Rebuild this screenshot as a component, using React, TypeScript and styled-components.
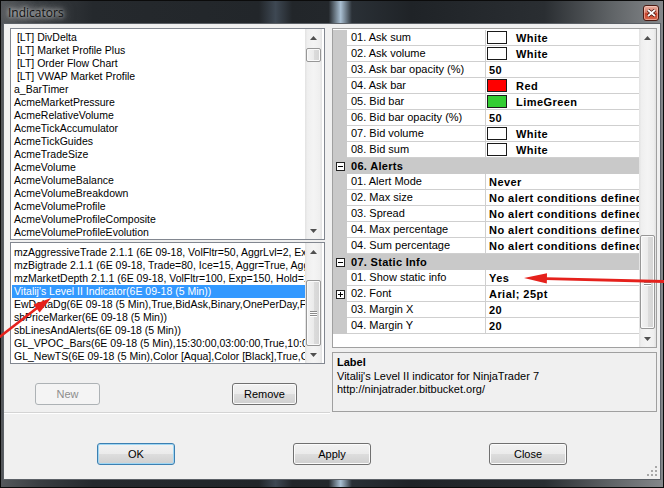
import React from 'react';
import styled, { createGlobalStyle } from 'styled-components';

const GlobalStyle = createGlobalStyle`
  html, body {
    margin: 0;
    padding: 0;
    background: #000;
  }
  body {
    font-family: 'Liberation Sans', Arial, sans-serif;
  }
  * {
    box-sizing: border-box;
  }
`;

const available = [
  ' [LT] DivDelta',
  ' [LT] Market Profile Plus',
  ' [LT] Order Flow Chart',
  ' [LT] VWAP Market Profile',
  'a_BarTimer',
  'AcmeMarketPressure',
  'AcmeRelativeVolume',
  'AcmeTickAccumulator',
  'AcmeTickGuides',
  'AcmeTradeSize',
  'AcmeVolume',
  'AcmeVolumeBalance',
  'AcmeVolumeBreakdown',
  'AcmeVolumeProfile',
  'AcmeVolumeProfileComposite',
  'AcmeVolumeProfileEvolution',
];

const applied = [
  'mzAggressiveTrade 2.1.1 (6E 09-18, VolFltr=50, AggrLvl=2, Exp=150)',
  'mzBigtrade 2.1.1 (6E 09-18, Trade=80, Ice=15, Aggr=True, Agg=5)',
  'mzMarketDepth 2.1.1 (6E 09-18, VolFltr=100, Exp=150, Hold=10)',
  "Vitalij's Level II Indicator(6E 09-18 (5 Min))",
  'EwDeltaDg(6E 09-18 (5 Min),True,BidAsk,Binary,OnePerDay,False)',
  'sbPriceMarker(6E 09-18 (5 Min))',
  'sbLinesAndAlerts(6E 09-18 (5 Min))',
  'GL_VPOC_Bars(6E 09-18 (5 Min),15:30:00,03:00:00,True,10:00:00)',
  'GL_NewTS(6E 09-18 (5 Min),Color [Aqua],Color [Black],True,Color [Red])',
];

type Prop = {
  name: string;
  value: string;
  swatch?: string;
  expand?: boolean;
};

type Section = { title?: string; rows: Prop[] };

const NO_ALERT = 'No alert conditions defined';

const sections: Section[] = [
  {
    rows: [
      { name: '01. Ask sum', value: 'White', swatch: '#ffffff' },
      { name: '02. Ask volume', value: 'White', swatch: '#ffffff' },
      { name: '03. Ask bar opacity (%)', value: '50' },
      { name: '04. Ask bar', value: 'Red', swatch: '#ff0000' },
      { name: '05. Bid bar', value: 'LimeGreen', swatch: '#32cd32' },
      { name: '06. Bid bar opacity (%)', value: '50' },
      { name: '07. Bid volume', value: 'White', swatch: '#ffffff' },
      { name: '08. Bid sum', value: 'White', swatch: '#ffffff' },
    ],
  },
  {
    title: '06. Alerts',
    rows: [
      { name: '01. Alert Mode', value: 'Never' },
      { name: '02. Max size', value: NO_ALERT },
      { name: '03. Spread', value: NO_ALERT },
      { name: '04. Max percentage', value: NO_ALERT },
      { name: '04. Sum percentage', value: NO_ALERT },
    ],
  },
  {
    title: '07. Static Info',
    rows: [
      { name: '01. Show static info', value: 'Yes' },
      { name: '02. Font', value: 'Arial; 25pt', expand: true },
      { name: '03. Margin X', value: '20' },
      { name: '04. Margin Y', value: '20' },
    ],
  },
];

const Arrow = ({ down }: { down?: boolean }) => (
  <svg width="7" height="4" viewBox="0 0 7 4">
    <path d={down ? 'M0 0 L7 0 L3.5 4 Z' : 'M0 4 L3.5 0 L7 4 Z'} fill="#505050" />
  </svg>
);

const Expander = ({ plus }: { plus?: boolean }) => (
  <svg width="9" height="9" viewBox="0 0 9 9">
    <rect x="0.5" y="0.5" width="8" height="8" fill="#fff" stroke="#222" />
    <line x1="2" y1="4.5" x2="7" y2="4.5" stroke="#000" />
    {plus && <line x1="4.5" y1="2" x2="4.5" y2="7" stroke="#000" />}
  </svg>
);

const ScrollBar = ({ top, size }: { top: number; size: number }) => (
  <ScrollTrack>
    <ArrowButton>
      <Arrow />
    </ArrowButton>
    <TrackBody>
      <Thumb $top={top} $size={size}>
        {size > 24 && (
          <Grip>
            <span />
            <span />
            <span />
          </Grip>
        )}
      </Thumb>
    </TrackBody>
    <ArrowButton>
      <Arrow down />
    </ArrowButton>
  </ScrollTrack>
);

const App = () => {
  return (
    <>
      <GlobalStyle />
      <Window>
        <TitleBar>
          <Caption>Indicators</Caption>
          <CloseButton>
            <svg width="9" height="8" viewBox="0 0 9 8">
              <path d="M1 1 L8 7 M8 1 L1 7" stroke="#3a0c05" strokeWidth="3.2" />
              <path d="M1 1 L8 7 M8 1 L1 7" stroke="#fff" strokeWidth="1.8" />
            </svg>
          </CloseButton>
        </TitleBar>

        <Client>
          <Main>
            <LeftPanel>
              <ListBox $height={212}>
                <Items $padTop={2}>
                  {available.map((item) => (
                    <Item key={item}>{item}</Item>
                  ))}
                </Items>
                <ScrollBar top={2} size={14} />
              </ListBox>
              <ListBox $height={122}>
                <Items $padTop={3}>
                  {applied.map((item, i) => (
                    <Item key={item} $selected={i === 3}>
                      {item}
                    </Item>
                  ))}
                </Items>
                <ScrollBar top={20} size={66} />
              </ListBox>
              <ListButtons>
                <Button $width={65} disabled>
                  New
                </Button>
                <Button $width={65}>Remove</Button>
              </ListButtons>
            </LeftPanel>

            <RightPanel>
              <Grid>
                <GridBody>
                  {sections.map((section, si) => (
                    <React.Fragment key={si}>
                      {section.title && (
                        <CategoryRow>
                          <Gutter>
                            <Expander />
                          </Gutter>
                          <CategoryName>{section.title}</CategoryName>
                        </CategoryRow>
                      )}
                      {section.rows.map((row) => (
                        <PropRow key={row.name}>
                          <Gutter>{row.expand && <Expander plus />}</Gutter>
                          <NameCell>{row.name}</NameCell>
                          <ValueCell $swatch={!!row.swatch}>
                            {row.swatch && <Swatch style={{ background: row.swatch }} />}
                            {row.value}
                          </ValueCell>
                        </PropRow>
                      ))}
                    </React.Fragment>
                  ))}
                </GridBody>
                <ScrollBar top={189} size={94} />
              </Grid>
              <HelpBox>
                <HelpTitle>Label</HelpTitle>
                <HelpText>Vitalij's Level II indicator for NinjaTrader 7</HelpText>
                <HelpText>http://ninjatrader.bitbucket.org/</HelpText>
              </HelpBox>
            </RightPanel>
          </Main>

          <DialogButtons>
            <Button $width={78} $default>
              OK
            </Button>
            <Button $width={78}>Apply</Button>
            <Button $width={78}>Close</Button>
          </DialogButtons>

          <SizeGrip width="10" height="10" viewBox="0 0 10 10">
            <g fill="#a8a8a8">
              <rect x="8" y="0" width="2" height="2" />
              <rect x="4" y="4" width="2" height="2" />
              <rect x="8" y="4" width="2" height="2" />
              <rect x="0" y="8" width="2" height="2" />
              <rect x="4" y="8" width="2" height="2" />
              <rect x="8" y="8" width="2" height="2" />
            </g>
          </SizeGrip>
        </Client>

        <BottomFrame />

        <Annotations width="664" height="488" viewBox="0 0 664 488">
          <line x1="-3" y1="339" x2="37" y2="308" stroke="#e5211c" strokeWidth="2.6" />
          <polygon points="51,298 33.5,304.6 39.7,312.4" fill="#e5211c" />
          <line x1="546" y1="278.6" x2="668" y2="281.6" stroke="#e5211c" strokeWidth="2.8" />
          <polygon points="524,278 547,273.3 546.8,283.5" fill="#e5211c" />
        </Annotations>
      </Window>
    </>
  );
};

const Window = styled.div`
  position: relative;
  width: 664px;
  height: 488px;
  display: flex;
  flex-direction: column;
  overflow: hidden;
  background: linear-gradient(
    90deg,
    #55585c 0%,
    #3a3e42 6%,
    #25292d 14%,
    #22262a 39%,
    #3e4853 41.5%,
    #22262a 44%,
    #23272b 49.5%,
    #a9bfd2 51.3%,
    #2a3036 53%,
    #1f2327 62%,
    #2a2e32 82%,
    #5f6366 92%,
    #85888b 100%
  );
  box-shadow: inset 0 0 0 1px #0b0b0b;
`;

const TitleBar = styled.div`
  height: 24px;
  flex-shrink: 0;
  display: flex;
  align-items: flex-start;
  justify-content: space-between;
  padding: 0 5px 0 8px;
`;

const Caption = styled.div`
  margin-top: 4px;
  font-family: 'Open Sans', 'Noto Sans', sans-serif;
  font-size: 12px;
  line-height: 17px;
  color: #111;
  text-shadow: 0 0 4px rgba(255, 255, 255, 0.9), 0 0 9px rgba(230, 230, 230, 0.8),
    0 0 14px rgba(200, 200, 200, 0.6);
`;

const CloseButton = styled.div`
  margin-top: 5px;
  width: 16px;
  height: 16px;
  display: flex;
  align-items: center;
  justify-content: center;
  border: 1px solid #4b1a12;
  border-radius: 3px;
  background: linear-gradient(#eab2a4 0%, #d97a66 45%, #c5412a 55%, #d9684c 100%);
  box-shadow: inset 0 0 0 1px rgba(255, 220, 210, 0.5);
`;

const Client = styled.div`
  position: relative;
  flex: 1;
  margin: 0 4px;
  display: flex;
  flex-direction: column;
  background: #f0f0f0;
  box-shadow: 0 0 0 1px #5b6066;
`;

const BottomFrame = styled.div`
  height: 9px;
  flex-shrink: 0;
`;

const Main = styled.div`
  height: 389px;
  display: flex;
  flex-shrink: 0;
`;

const LeftPanel = styled.div`
  width: 326px;
  padding: 4px 5px 0 6px;
  display: flex;
  flex-direction: column;
  gap: 2px;
  border-bottom: 1px solid #d4d4d4;
  box-shadow: 0 1px 0 #ffffff;
`;

const ListBox = styled.div<{ $height: number }>`
  height: ${(p) => p.$height}px;
  flex-shrink: 0;
  display: flex;
  padding: 0 2px 0 1px;
  border: 1px solid #828790;
  background: #fff;
`;

const Items = styled.div<{ $padTop: number }>`
  flex: 1;
  min-width: 0;
  padding-top: ${(p) => p.$padTop}px;
  overflow: hidden;
`;

const Item = styled.div<{ $selected?: boolean }>`
  height: 13px;
  padding-left: 2px;
  font-size: 10.5px;
  line-height: 13px;
  white-space: pre;
  overflow: hidden;
  color: ${(p) => (p.$selected ? '#fff' : '#000')};
  background: ${(p) => (p.$selected ? '#3399ff' : 'transparent')};
`;

const ScrollTrack = styled.div`
  width: 17px;
  flex-shrink: 0;
  display: flex;
  flex-direction: column;
  background: linear-gradient(90deg, #e2e2e2 0%, #efefef 15%, #f4f4f4 50%, #efefef 85%, #e2e2e2 100%);
`;

const ArrowButton = styled.div`
  height: 17px;
  flex-shrink: 0;
  display: flex;
  align-items: center;
  justify-content: center;
`;

const TrackBody = styled.div`
  flex: 1;
  display: flex;
  flex-direction: column;
  align-items: center;
`;

const Thumb = styled.div<{ $top: number; $size: number }>`
  margin-top: ${(p) => p.$top}px;
  height: ${(p) => p.$size}px;
  width: 15px;
  display: flex;
  align-items: center;
  justify-content: center;
  border: 1px solid #979797;
  border-radius: 2px;
  background: linear-gradient(90deg, #f3f3f3 0%, #ebebeb 50%, #dcdcdc 51%, #d4d4d4 100%);
  box-shadow: inset 0 0 0 1px #fafafa;
`;

const Grip = styled.div`
  display: flex;
  flex-direction: column;
  gap: 1px;

  span {
    display: block;
    width: 7px;
    height: 1px;
    background: #8c8c8c;
    box-shadow: 0 1px 0 #fff;
  }
`;

const ListButtons = styled.div`
  display: flex;
  gap: 132px;
  padding: 17px 0 0 25px;
`;

const Button = styled.button<{ $width: number; $default?: boolean }>`
  width: ${(p) => p.$width}px;
  height: 22px;
  padding: 0;
  font-family: 'Liberation Sans', Arial, sans-serif;
  font-size: 11px;
  color: #000;
  border: 1px solid ${(p) => (p.$default ? '#3c7fb1' : '#707070')};
  border-radius: 3px;
  background: linear-gradient(#f2f2f2 0%, #ebebeb 48%, #dddddd 52%, #cfcfcf 100%);
  box-shadow: inset 0 0 0 1px ${(p) => (p.$default ? '#9fd6f3' : '#fbfbfb')};

  &:disabled {
    color: #8d8d8d;
    border-color: #adb2b5;
    background: #f4f4f4;
    box-shadow: none;
  }
`;

const RightPanel = styled.div`
  width: 325px;
  margin-left: 2px;
  padding-top: 4px;
  display: flex;
  flex-direction: column;
  gap: 4px;
`;

const Grid = styled.div`
  height: 320px;
  flex-shrink: 0;
  display: flex;
  border: 1px solid #a0a0a0;
  background: #fff;
`;

const GridBody = styled.div`
  flex: 1;
  min-width: 0;
  padding-top: 1px;
  display: flex;
  flex-direction: column;
  overflow: hidden;
  font-size: 11px;
  color: #000;
`;

const PropRow = styled.div`
  height: 16px;
  flex-shrink: 0;
  display: flex;
`;

const CategoryRow = styled(PropRow)`
  background: #c9c9c9;
`;

const Gutter = styled.div`
  width: 14px;
  flex-shrink: 0;
  display: flex;
  align-items: center;
  justify-content: center;
  background: #c9c9c9;
`;

const CategoryName = styled.div`
  padding-left: 4px;
  line-height: 16px;
  font-weight: bold;
  letter-spacing: 0.3px;
`;

const NameCell = styled.div`
  width: 139px;
  flex-shrink: 0;
  padding-left: 4px;
  line-height: 15px;
  white-space: nowrap;
  overflow: hidden;
  border-right: 1px solid #cfcfcf;
  border-bottom: 1px solid #cfcfcf;
`;

const ValueCell = styled.div<{ $swatch?: boolean }>`
  flex: 1;
  min-width: 0;
  display: flex;
  align-items: center;
  gap: 9px;
  padding-left: ${(p) => (p.$swatch ? 1 : 3)}px;
  font-weight: bold;
  letter-spacing: 0.45px;
  white-space: nowrap;
  overflow: hidden;
  border-bottom: 1px solid #cfcfcf;
`;

const Swatch = styled.span`
  width: 20px;
  height: 13px;
  flex-shrink: 0;
  border: 1px solid #1a1a1a;
`;

const HelpBox = styled.div`
  height: 60px;
  padding: 3px 0 0 4px;
  border: 1px solid #a0a0a0;
  background: #f0f0f0;
  font-size: 11px;
  line-height: 13px;
  color: #000;
`;

const HelpTitle = styled.div`
  font-weight: bold;
  margin-bottom: 1px;
`;

const HelpText = styled.div`
  white-space: nowrap;
`;

const DialogButtons = styled.div`
  display: flex;
  gap: 118px;
  padding: 30px 0 0 93px;
`;

const SizeGrip = styled.svg`
  position: absolute;
  right: 3px;
  bottom: 3px;
`;

const Annotations = styled.svg`
  position: absolute;
  left: 0;
  top: 0;
  pointer-events: none;
`;

export default App;
